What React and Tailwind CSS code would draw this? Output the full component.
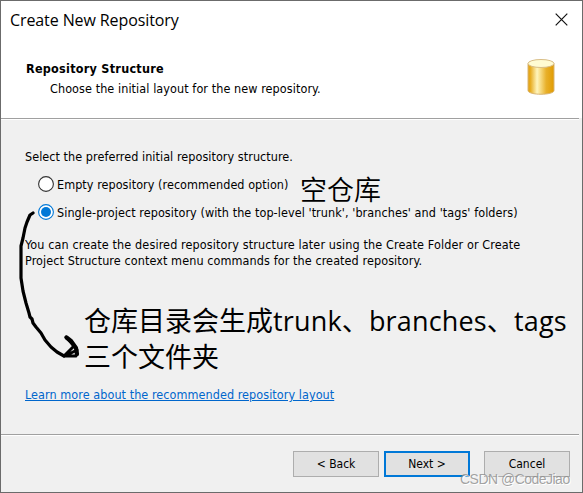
import React from 'react';

const buttonBase = 'flex h-[26px] w-[86px] items-center justify-center bg-[#e1e1e1] text-[12px]';

function CylinderIcon() {
  return (
    <svg width="28" height="38" viewBox="0 0 28 38">
      <defs>
        <linearGradient id="gold" x1="0" x2="1" y1="0" y2="0">
          <stop offset="0" stopColor="#e2a00c" />
          <stop offset="0.1" stopColor="#e8ae25" />
          <stop offset="0.35" stopColor="#fff5bd" />
          <stop offset="0.48" stopColor="#f7dc85" />
          <stop offset="0.7" stopColor="#e8b02a" />
          <stop offset="1" stopColor="#e19b00" />
        </linearGradient>
      </defs>
      <path d="M1 5.5v27c0 5 26 5 26 0V5.5z" fill="url(#gold)" stroke="#d9b574" strokeWidth="1" />
      <ellipse cx="14" cy="5.5" rx="13" ry="4" fill="#fffbd2" stroke="#d8bd86" strokeWidth="1" />
    </svg>
  );
}

function Radio({ checked }) {
  return (
    <svg width="16" height="16" viewBox="0 0 16 16" className="shrink-0">
      <circle cx="8" cy="8" r="7.4" fill="#fff" stroke={checked ? '#0078d7' : '#333'} strokeWidth="1.1" />
      {checked && <circle cx="8" cy="8" r="5" fill="#0078d7" />}
    </svg>
  );
}

export default function App() {
  return (
    <div className="relative flex h-[493px] w-[583px] flex-col overflow-hidden border border-[#6b6b6b] bg-[#f0f0f0] font-['DejaVu_Sans_Condensed','DejaVu_Sans',sans-serif] text-[12.5px] leading-4 whitespace-nowrap text-black [font-stretch:condensed]">
      <header className="h-[117px] shrink-0 bg-white">
        <div className="flex h-[38px] items-center justify-between pr-[14px] pl-[9px]">
          <h1 className="font-['Open_Sans',sans-serif] text-[16px] leading-5 tracking-[-0.1px] [font-stretch:normal]"><span>Create New Repository</span></h1>
          <svg width="13" height="13" viewBox="0 0 13 13" className="-mt-px"><path d="M.7.7l11.6 11.6M12.3.7L.7 12.3" stroke="#111" strokeWidth="1.2" /></svg>
        </div>
        <div className="flex justify-between pt-[19px] pr-[27px] pl-[25px]">
          <div className="pt-[3px]">
            <h2 className="font-bold tracking-[0.26px]"><span>Repository Structure</span></h2>
            <p className="mt-1 pl-6 tracking-[0.08px]"><span>Choose the initial layout for the new repository.</span></p>
          </div>
          <CylinderIcon />
        </div>
      </header>
      <div className="mr-[3px] h-[2px] shrink-0 border-t border-b border-t-[#a0a0a0] border-b-white" />
      <main className="h-[314px] shrink-0 pt-[29px] pl-6">
        <p className="tracking-[0.05px]"><span>Select the preferred initial repository structure.</span></p>
        <div className="mt-[11px] flex h-4 items-start gap-[3px] pl-[13px] leading-[18px] tracking-[0.05px]"><Radio /><span>Empty repository (recommended option)</span></div>
        <div className="mt-3 flex h-4 items-start gap-[3px] pl-[13px] leading-[18px] tracking-[0.07px]"><Radio checked /><span>Single-project repository (with the top-level 'trunk', 'branches' and 'tags' folders)</span></div>
        <p className="mt-[17px] tracking-[0.12px]"><span>You can create the desired repository structure later using the Create Folder or Create</span></p>
        <p className="tracking-[0.09px]"><span>Project Structure context menu commands for the created repository.</span></p>
        <a className="mt-[118px] block tracking-[0.06px] text-[#0066cc] underline underline-offset-1"><span>Learn more about the recommended repository layout</span></a>
      </main>
      <div className="mr-[3px] h-[2px] shrink-0 border-t border-b border-t-[#a0a0a0] border-b-white" />
      <footer className="flex justify-end pt-[15px] pr-[12px]">
        <button className={`${buttonBase} mr-[5px] border border-[#adadad]`}>&lt; Back</button>
        <button className={`${buttonBase} mr-[14px] border-2 border-[#0078d7]`}>Next &gt;</button>
        <button className={`${buttonBase} border border-[#adadad]`}>Cancel</button>
      </footer>

      <div className="absolute top-[175px] left-[299px] font-['Noto_Sans_CJK_SC',sans-serif] text-[27px] leading-[26px] font-[350] [font-stretch:normal]">空仓库</div>
      <div className="absolute top-[302px] left-[83px] font-['Open_Sans','Noto_Sans_CJK_SC',sans-serif] text-[27px] leading-9 [font-stretch:normal]">
        <div><span>仓库目录会生成</span><span className="tracking-[0.16px]">trunk、</span><span className="tracking-[0.16px]">branches、</span><span className="tracking-[0.16px]">tags</span></div>
        <div>三个文件夹</div>
      </div>
      <svg className="absolute -top-px -left-px" width="90" height="370" viewBox="0 0 90 370" fill="none" stroke="#000" strokeLinecap="round" strokeLinejoin="round">
        <path d="M33 213L30 215L27 222L25 228L23 238L21 246V278L23 291L26 303L29 313L30 317L32 319L33 323L36 327L41 333L45 340L51 347L57 352L64 356" strokeWidth="3.2" />
        <path d="M66.5 337.5L71 341L76 348L77 354" strokeWidth="4.2" />
        <path d="M66 337L74 346L64 356H76L77 350L69 354" strokeWidth="3" />
      </svg>
      <div className="absolute top-[470px] left-[459px] font-['Liberation_Sans',sans-serif] text-[14px] leading-4 tracking-[-0.52px] text-[#8c8c8c]/80 [font-stretch:normal] [text-shadow:1px_1px_0_#fff]">CSDN @CodeJiao</div>
    </div>
  );
}
